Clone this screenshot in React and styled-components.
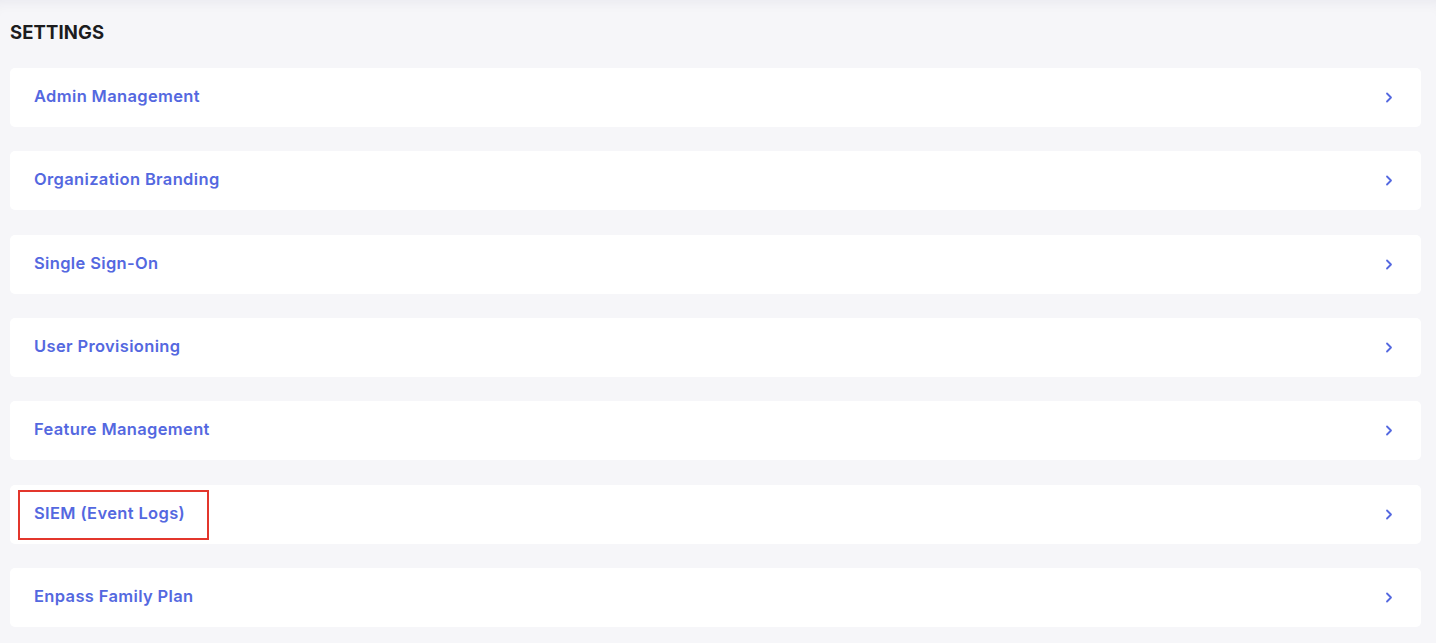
import React from "react";
import styled, { createGlobalStyle } from "styled-components";

const Global = createGlobalStyle`
  html, body { margin: 0; padding: 0; background: #f6f6f9; }
  body { font-family: Inter, "Open Sans", sans-serif; }
`;

const Page = styled.div`
  min-height: 643px;
  box-sizing: border-box;
  padding: 18px 15px 0 10px;
  background: #f6f6f9;
  box-shadow: inset 0 12px 14px -10px rgba(20, 20, 60, 0.06);
`;

const Title = styled.h1`
  margin: 0 0 22px 0;
  font-family: Inter, sans-serif;
  font-weight: 700;
  font-size: 18.5px;
  line-height: 28px;
  color: #1c1c1e;
  letter-spacing: 0.1px;
`;

const List = styled.div`
  display: flex;
  flex-direction: column;
  gap: 24.33px;
`;

const Card = styled.div`
  position: relative;
  height: 59px;
  background: #ffffff;
  border-radius: 5px;
  display: flex;
  align-items: center;
  justify-content: space-between;
  padding: 0 28px 0 24px;
  cursor: pointer;
`;

const Label = styled.span`
  font-family: Inter, sans-serif;
  font-weight: 600;
  font-size: 16.5px;
  color: #5468e0;
  letter-spacing: 0.35px;
  margin-top: -3px;
`;

const Highlight = styled.div`
  position: absolute;
  left: 8px;
  top: 5px;
  width: 191px;
  height: 50px;
  border: 2px solid #e3362c;
  box-sizing: border-box;
  pointer-events: none;
`;

const Chevron = () => (
  <svg width="8" height="11" viewBox="0 0 8 11" fill="none">
    <path d="M2 1.5 L6 5.5 L2 9.5" stroke="#5468e0" strokeWidth="1.8" strokeLinecap="round" strokeLinejoin="round" />
  </svg>
);

const items = [
  "Admin Management",
  "Organization Branding",
  "Single Sign-On",
  "User Provisioning",
  "Feature Management",
  "SIEM (Event Logs)",
  "Enpass Family Plan",
];

export default function App() {
  return (
    <>
      <Global />
      <Page>
        <Title>SETTINGS</Title>
        <List>
          {items.map((t) => (
            <Card key={t}>
              <Label>{t}</Label>
              <Chevron />
              {t === "SIEM (Event Logs)" && <Highlight />}
            </Card>
          ))}
        </List>
      </Page>
    </>
  );
}
